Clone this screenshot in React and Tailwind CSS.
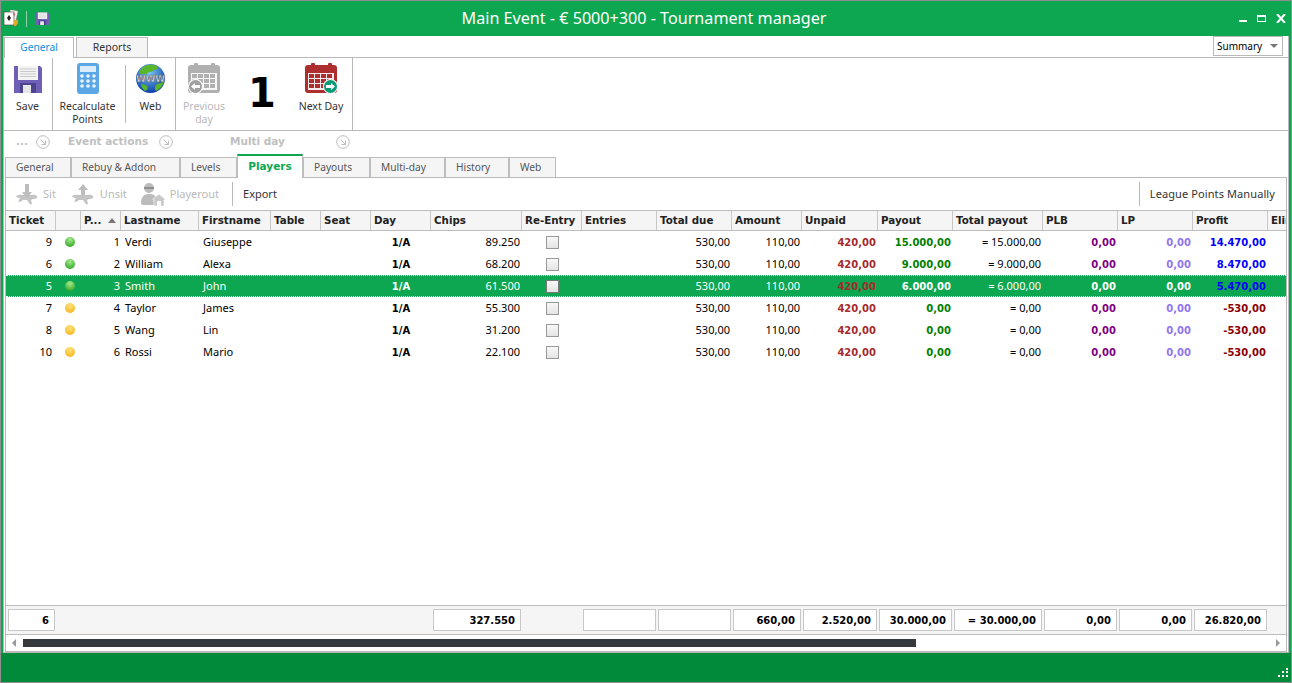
import React from "react";

const COLS = "grid grid-cols-[50px_25px_40px_78px_72px_50px_50px_60px_91px_60px_75px_75px_70px_76px_75px_90px_75px_75px_75px_19px]";
const BOLD = "font-['DejaVu_Sans',sans-serif] font-bold text-[10px]";

const headers = ["Ticket", "", "P...", "Lastname", "Firstname", "Table", "Seat", "Day", "Chips", "Re-Entry", "Entries", "Total due", "Amount", "Unpaid", "Payout", "Total payout", "PLB", "LP", "Profit", "Elim"];

const players = [
  { ticket: 9, pos: 1, last: "Verdi", first: "Giuseppe", chips: "89.250", payout: "15.000,00", total: "= 15.000,00", profit: "14.470,00", on: true },
  { ticket: 6, pos: 2, last: "William", first: "Alexa", chips: "68.200", payout: "9.000,00", total: "= 9.000,00", profit: "8.470,00", on: true },
  { ticket: 5, pos: 3, last: "Smith", first: "John", chips: "61.500", payout: "6.000,00", total: "= 6.000,00", profit: "5.470,00", on: true, selected: true },
  { ticket: 7, pos: 4, last: "Taylor", first: "James", chips: "55.300", payout: "0,00", total: "= 0,00", profit: "-530,00" },
  { ticket: 8, pos: 5, last: "Wang", first: "Lin", chips: "31.200", payout: "0,00", total: "= 0,00", profit: "-530,00" },
  { ticket: 10, pos: 6, last: "Rossi", first: "Mario", chips: "22.100", payout: "0,00", total: "= 0,00", profit: "-530,00" },
];

function Floppy({ size = 28 }) {
  return (
    <svg width={size} height={size} viewBox="0 0 28 28">
      <path d="M0 1h26l2 2v25H0z" fill="#6f5fb5" />
      <rect x="4" y="1" width="20" height="14" fill="#f4f4f4" />
      <path d="M6 4h16M6 6.500h16M6 9h16M6 11.500h16" stroke="#c9c9c9" />
      <rect x="6" y="18" width="16" height="10" fill="#4d4390" />
      <rect x="9" y="20" width="8" height="8" fill="#e6e6e6" />
    </svg>
  );
}

function Calculator() {
  return (
    <svg width="22" height="31" viewBox="0 0 22 31">
      <rect width="22" height="31" rx="3" fill="#5ba7e6" />
      <rect x="3" y="3" width="16" height="6" fill="#d9ecfb" />
      {[13, 18, 23].map((y) =>
        [5, 11, 17].map((x) => <circle key={x + "-" + y} cx={x} cy={y} r="1.800" fill="#eaf5fd" />)
      )}
    </svg>
  );
}

function Globe() {
  return (
    <svg width="31" height="31" viewBox="0 0 31 31">
      <defs>
        <radialGradient id="sea" cx="45%" cy="30%" r="70%">
          <stop offset="0%" stopColor="#7fc8f5" />
          <stop offset="100%" stopColor="#0b3fa8" />
        </radialGradient>
      </defs>
      <circle cx="15.500" cy="15.500" r="14.500" fill="url(#sea)" />
      <path d="M7 5c4-4 11-4 15-2 2 2 0 4-3 4-2 3-6 1-7 4H4c0-2 1-4 3-6zM22 21c3-1 5-1 7-3-1 5-4 8-8 10-2-2-1-5 1-7zM6 21c3 0 6 1 7 4-1 2-2 3-3 3-2-2-4-4-4-7z" fill="#58b52c" />
      <text x="15.500" y="19" textAnchor="middle" fontFamily="'DejaVu Sans', sans-serif" fontWeight="700" fontSize="9.500" fill="#dcdcdc" stroke="#666" strokeWidth="0.500" textLength="29" lengthAdjust="spacingAndGlyphs">WWW</text>
    </svg>
  );
}

function CalendarIcon({ color, badge, arrowLeft }) {
  return (
    <svg width="33" height="31" viewBox="0 0 33 31">
      <rect x="0" y="2" width="32" height="28" rx="3" fill={color} />
      <rect x="6" y="0" width="4" height="5" rx="1" fill={color} />
      <rect x="23" y="0" width="4" height="5" rx="1" fill={color} />
      <rect x="3" y="10" width="26" height="17" fill="#fff" opacity="0.9" />
      {[11, 16, 21].map((y) =>
        [4, 10, 16, 22].map((x) => <rect key={x + "-" + y} x={x} y={y} width="5" height="4" fill={color} />)
      )}
      <g transform={arrowLeft ? "translate(0 16)" : "translate(18 16)"}>
        <circle cx="7.500" cy="7.500" r="7.500" fill="#fff" />
        <circle cx="7.500" cy="7.500" r="6.500" fill={badge} />
        {arrowLeft ? (
          <path d="M3 7.500l4-3.500v2h5v3H7v2z" fill="#fff" />
        ) : (
          <path d="M12 7.500L8 4v2H3v3h5v2z" fill="#fff" />
        )}
      </g>
    </svg>
  );
}

function SitIcon({ up }) {
  return (
    <svg width="23" height="23" viewBox="0 0 23 23">
      <path d="M1 13c3-2 6-1 8-1h6c3 0 5-1 7 1 1 2-1 3-4 3l-2 1 1 4c-1 1-3 0-3-1l-2-3H8l-3 2c-2 0-2-1-1-2l1-2c-2 0-4 0-4-3z" fill="#c4c4c4" />
      {up ? (
        <path d="M12 1l5 6h-3v5h-4V7H7z" fill="#bdbdbd" />
      ) : (
        <path d="M10 1h4v8h3l-5 6-5-6h3z" fill="#bdbdbd" />
      )}
    </svg>
  );
}

function PlayerOutIcon() {
  return (
    <svg width="24" height="24" viewBox="0 0 24 24">
      <circle cx="8" cy="6" r="5" fill="#bcbcbc" />
      <path d="M3 5h10v2H3z" fill="#8f8f8f" />
      <path d="M0 21c0-6 3-9 8-9s7 2 8 5v6H2c-1 0-2-1-2-2z" fill="#bcbcbc" />
      <path d="M12 17l6-5 6 5v1h-1v6H13v-6h-1z" fill="#c9c9c9" stroke="#fff" strokeWidth="0.600" />
      <rect x="16" y="19" width="4" height="5" fill="#fff" />
    </svg>
  );
}

function CornerArrow() {
  return (
    <svg width="14" height="14" viewBox="0 0 14 14" fill="none" stroke="#bdbdbd">
      <circle cx="7" cy="7" r="6.300" />
      <path d="M4.500 4.500L9.500 9.500M9.500 5.500v4h-4" />
    </svg>
  );
}

function CardsIcon() {
  return (
    <svg width="16" height="17" viewBox="0 0 16 17">
      <rect x="6" y="0" width="8" height="11" fill="#f2f2f2" stroke="#777" strokeWidth="0.600" transform="rotate(12 10 6)" />
      <rect x="1" y="2" width="10" height="13" fill="#fff" stroke="#555" strokeWidth="0.700" />
      <path d="M4 8l2-3 2 3-2 3z" fill="#222" />
      <path d="M10 3l2 1-1 2z" fill="#c33" />
      <path d="M11 10h4v3l-2 3h-2z" fill="#e0a92b" />
    </svg>
  );
}

function RibbonButton({ label, second, disabled, className, children }) {
  return (
    <div className={`flex flex-col items-center pt-[5px] ${className}`}>
      <div className="h-[31px] flex items-center justify-center">{children}</div>
      <div className={`mt-[6px] text-[10.5px] leading-[13px] text-center ${disabled ? "text-[#b9b9b9]" : "text-[#333]"}`}>
        {label}
        {second && <div>{second}</div>}
      </div>
    </div>
  );
}

function Tab({ label, className }) {
  return (
    <div className={`h-[20px] pl-[10px] bg-[#f5f5f5] border border-b-0 border-[#bdbdbd] flex items-center text-[10.2px] text-[#555] ${className}`}>
      {label}
    </div>
  );
}

function PlayerRow({ p }) {
  const text = p.selected ? "text-white" : "text-black";
  const cell = "flex items-center justify-end pr-[2px] whitespace-nowrap";
  return (
    <div className={`${COLS} h-[22px] text-[11px] ${text} ${p.selected ? "bg-[#0ca750] border-y border-dotted border-white" : ""}`}>
      <div className={`${cell} pr-[4px]`}>{p.ticket}</div>
      <div className="flex items-center justify-center pl-[3px]">
        <span className={`w-[10px] h-[10px] rounded-full ${p.on ? "bg-[radial-gradient(circle_at_50%_25%,#a5ec8e,#1f9a12)]" : "bg-[radial-gradient(circle_at_50%_25%,#ffe37a,#f5ae10)]"}`} />
      </div>
      <div className="flex items-center justify-end pr-[1px]">{p.pos}</div>
      <div className="flex items-center pl-[4px]">{p.last}</div>
      <div className="flex items-center pl-[4px]">{p.first}</div>
      <div />
      <div />
      <div className={`flex items-center justify-center ${BOLD}`}>1/A</div>
      <div className={cell}>{p.chips}</div>
      <div className="flex items-center justify-center">
        <span className={`w-[13px] h-[13px] border bg-gradient-to-b from-[#f8f8f8] to-[#e4e4e4] ${p.selected ? "border-[#777]" : "border-[#999]"}`} />
      </div>
      <div />
      <div className={cell}>530,00</div>
      <div className={cell}>110,00</div>
      <div className={`${cell} ${BOLD} text-[#a52a2a]`}>420,00</div>
      <div className={`${cell} ${BOLD} ${p.selected ? "text-white" : "text-[#008000]"}`}>{p.payout}</div>
      <div className={cell}>{p.total}</div>
      <div className={`${cell} ${BOLD} ${p.selected ? "text-white" : "text-[#800080]"}`}>0,00</div>
      <div className={`${cell} ${BOLD} ${p.selected ? "text-white" : "text-[#8f75ee]"}`}>0,00</div>
      <div className={`${cell} ${BOLD} ${p.profit[0] === "-" ? "text-[#8b0000]" : "text-[#0000ff]"}`}>{p.profit}</div>
      <div />
    </div>
  );
}

function Total({ value, wide }) {
  return (
    <div className={`h-[22px] mr-px bg-white border border-[#c8c8c8] flex items-center justify-end pr-[5px] text-black ${wide ? "ml-[2px]" : "ml-px"} ${BOLD}`}>
      {value}
    </div>
  );
}

export default function App() {
  return (
    <div className="w-[1292px] h-[683px] flex flex-col overflow-hidden border border-[#8f8f8f] bg-[#0ca750] font-['Noto_Sans',sans-serif]">
      {/* title bar */}
      <div className="h-[35px] flex items-center text-white">
        <div className="w-[300px] flex items-center pl-[2px]">
          <CardsIcon />
          <div className="w-px h-[16px] bg-[#8fd3ab] ml-[7px] mr-[9px]" />
          <Floppy size={13} />
        </div>
        <div className="flex-1 text-center text-[16.15px] pr-[4px]">Main Event - € 5000+300 - Tournament manager</div>
        <div className="w-[300px] flex items-center justify-end gap-[10px] pr-[5px]">
          <div className="w-[8px] h-[7px] border-b-2 border-white" />
          <div className="w-[9px] h-[7px] border border-t-2 border-white" />
          <svg width="10" height="9" viewBox="0 0 10 9" stroke="#fff" strokeWidth="2">
            <path d="M1 0l8 9M9 0L1 9" />
          </svg>
        </div>
      </div>

      <div className="h-[617px] mx-[2px] flex flex-col bg-white border-b border-x border-[#b9b9b9]">
        {/* ribbon tabs */}
        <div className="h-[21px] flex items-end pr-[5px]">
          <div className="w-[70px] h-[21px] -mb-px z-10 bg-white border border-b-0 border-[#b9b9b9] flex items-center justify-center text-[10.2px] text-[#0b8fe0]">General</div>
          <div className="w-[72px] h-[20px] ml-[2px] bg-[#f5f5f5] border border-b-0 border-[#b9b9b9] flex items-center justify-center text-[10.5px] text-[#333]">Reports</div>
          <div className="ml-auto w-[70px] h-[20px] mb-px border border-[#b9b9b9] flex items-center justify-between pl-[3px] pr-[4px] text-[10px] text-black">
            Summary
            <span className="w-0 h-0 border-x-[4px] border-x-transparent border-t-[4px] border-t-[#777]" />
          </div>
        </div>

        {/* ribbon */}
        <div className="h-[74px] flex border-y border-[#b9b9b9]">
          <RibbonButton label="Save" className="w-[49px] pr-[1px] border-r border-[#b9b9b9]"><Floppy /></RibbonButton>
          <RibbonButton label="Recalculate" second="Points" className="w-[72px] pr-[3px]"><Calculator /></RibbonButton>
          <div className="w-px h-[58px] mt-[7px] bg-[#b9b9b9]" />
          <RibbonButton label="Web" className="w-[50px] border-r border-[#b9b9b9]"><Globe /></RibbonButton>
          <RibbonButton label="Previous" second="day" disabled className="w-[56px]">
            <CalendarIcon color="#b0b0b0" badge="#a0a0a0" arrowLeft />
          </RibbonButton>
          <div className="w-[60px] text-center font-['DejaVu_Sans',sans-serif] font-bold text-[40px] leading-[48px] pt-[11px] text-black">1</div>
          <RibbonButton label="Next Day" className="w-[58px]">
            <CalendarIcon color="#ad2e2e" badge="#0a9a76" />
          </RibbonButton>
          <div className="w-[3px] border-r border-[#b9b9b9]" />
        </div>

        {/* ribbon group captions */}
        <div className="h-[23px] flex items-start pt-[4px] text-[#c0c0c0] font-['DejaVu_Sans',sans-serif] font-bold text-[10.5px]">
          <div className="w-[48px] flex items-center justify-between pl-[12px] pr-[2px] h-[14px]">
            <span>...</span>
            <CornerArrow />
          </div>
          <div className="w-[123px] flex items-center justify-between pl-[16px] pr-[2px] h-[14px]">
            <span>Event actions</span>
            <CornerArrow />
          </div>
          <div className="w-[177px] flex items-center justify-between pl-[55px] pr-[2px] h-[14px]">
            <span>Multi day</span>
            <CornerArrow />
          </div>
        </div>

        {/* page tabs */}
        <div className="h-[23px] flex items-end pl-[1px] z-10">
          <Tab label="General" className="w-[66px]" />
          <Tab label="Rebuy & Addon" className="w-[109px]" />
          <Tab label="Levels" className="w-[57px]" />
          <div className="w-[66px] h-[24px] -mb-px bg-white border-x border-[#bdbdbd] border-t-2 border-t-[#0ca750] flex items-center justify-center text-[#0ca750] font-['DejaVu_Sans',sans-serif] font-bold text-[10.5px]">Players</div>
          <Tab label="Payouts" className="w-[67px]" />
          <Tab label="Multi-day" className="w-[75px]" />
          <Tab label="History" className="w-[64px]" />
          <Tab label="Web" className="w-[47px]" />
        </div>

        {/* page */}
        <div className="h-[475px] ml-[1px] mr-[1px] flex flex-col border border-[#b9b9b9] overflow-hidden">
          <div className="h-[32px] shrink-0 flex items-center text-[11px] text-[#b9b9b9]">
            <div className="ml-[9px]"><SitIcon /></div>
            <span className="ml-[5px]">Sit</span>
            <div className="ml-[15px]"><SitIcon up /></div>
            <span className="ml-[6px]">Unsit</span>
            <div className="ml-[14px]"><PlayerOutIcon /></div>
            <span className="ml-[5px]">Playerout</span>
            <div className="w-px h-[24px] bg-[#b9b9b9] ml-[13px]" />
            <span className="ml-[10px] text-[#333]">Export</span>
            <div className="w-px h-[24px] bg-[#b9b9b9] ml-auto" />
            <span className="ml-[10px] mr-[11px] text-[#333] tracking-[0.1px]">League Points Manually</span>
          </div>

          <div className={`${COLS} h-[21px] shrink-0 bg-[#f5f5f5] border-y border-[#bdbdbd] text-[#222] font-['DejaVu_Sans',sans-serif] font-bold text-[10.3px]`}>
            {headers.map((h, i) => (
              <div key={i} className="relative flex items-center pl-[3px] border-r border-[#c8c8c8] overflow-hidden whitespace-nowrap">
                {h}
                {i === 2 && <span className="absolute right-[4px] top-[7px] w-0 h-0 border-x-[4px] border-x-transparent border-b-[5px] border-b-[#777]" />}
              </div>
            ))}
          </div>

          <div className="flex-1">
            {players.map((p) => <PlayerRow key={p.ticket} p={p} />)}
          </div>

          <div className={`${COLS} h-[30px] shrink-0 items-center bg-[#f5f5f5] border-y border-[#bdbdbd]`}>
            <Total value="6" wide />
            <div className="col-span-7" />
            <Total value="327.550" wide />
            <div />
            <Total value="" />
            <Total value="" />
            <Total value="660,00" />
            <Total value="2.520,00" />
            <Total value="30.000,00" />
            <Total value="= 30.000,00" />
            <Total value="0,00" />
            <Total value="0,00" />
            <Total value="26.820,00" />
          </div>

          <div className="h-[16px] shrink-0 flex items-center pl-[6px] pr-[6px]">
            <span className="w-0 h-0 border-y-[4px] border-y-transparent border-r-[4px] border-r-[#999]" />
            <div className="flex-1 h-[8px] ml-[7px] mr-[360px] bg-[#36393c]" />
            <span className="w-0 h-0 border-y-[4px] border-y-transparent border-l-[4px] border-l-[#999]" />
          </div>
        </div>
      </div>

      {/* status bar */}
      <div className="flex-1 bg-[#018a3a] flex items-end justify-end pr-[2px] pb-[3px]">
        <svg width="11" height="11" viewBox="0 0 11 11" fill="#fff">
          <path d="M8 0h2v2H8zM8 3h2v2H8zM4 3h2v2H4zM8 7h2v2H8zM4 7h2v2H4zM0 7h2v2H0z" />
        </svg>
      </div>
    </div>
  );
}
